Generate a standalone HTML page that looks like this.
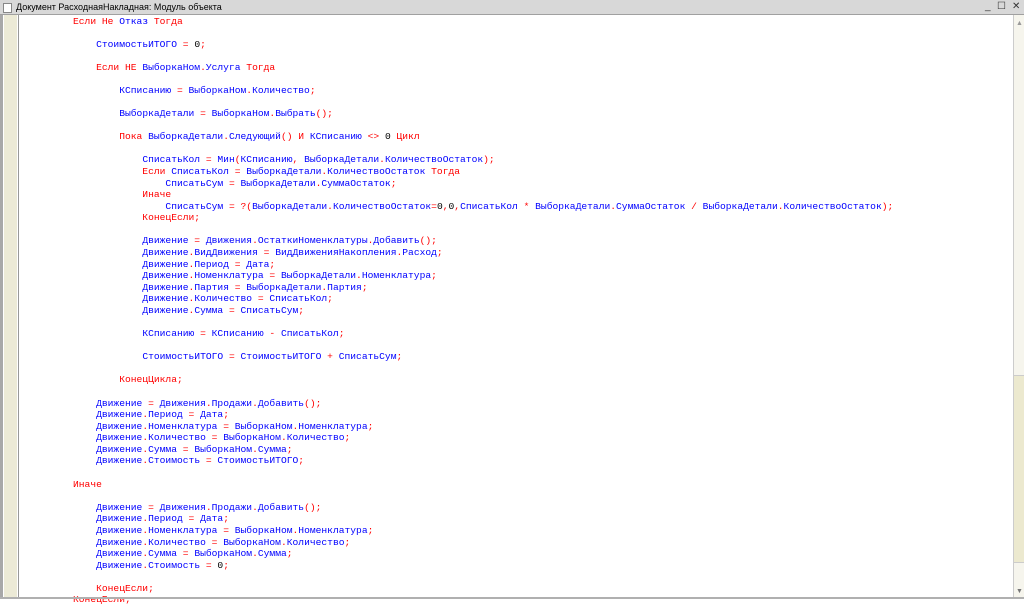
<!DOCTYPE html>
<html><head><meta charset="utf-8"><style>
html,body{margin:0;padding:0;width:1024px;height:599px;overflow:hidden;background:#fff;font-family:"Liberation Sans",sans-serif}
#title{position:absolute;left:0;top:0;width:1024px;height:14px;background:#d8d8d8;border-bottom:1px solid #a0a0a0;font-size:9px;line-height:14px;color:#000}
#title .ic{position:absolute;left:3px;top:3px;width:7px;height:8px;border:1px solid #888;background:#fff}
#title .t{position:absolute;left:16px;top:0}
#title .b{position:absolute;top:0;font-size:10px;color:#333}
#lb{position:absolute;left:0;top:15px;width:3px;height:584px;background:#a8a8a8}
#gut{position:absolute;left:4px;top:15px;width:13px;height:584px;background:#ecead6}
#gl{position:absolute;left:18px;top:15px;width:1px;height:584px;background:#999}
#sb{position:absolute;left:1013px;top:15px;width:11px;height:582px;background:#f6f5ed;border-left:1px solid #ccc}
#thumb{position:absolute;left:1013px;top:375px;width:11px;height:186px;background:#ece9cf;border-left:1px solid #ccc;border-top:1px solid #ccc;border-bottom:1px solid #ccc}
#bot{position:absolute;left:0;top:597px;width:1024px;height:2px;background:#b0b0b0}
pre{position:absolute;left:73px;top:15.5px;margin:0;font-family:"Liberation Mono",monospace;font-size:9.65px;line-height:11.58px;color:#ff0000}
.i{color:#0000ff}.n{color:#000}
</style></head><body>
<div id="title"><div class="ic"></div><span class="t">Документ РасходнаяНакладная: Модуль объекта</span>
<span class="b" style="left:985px">_</span><span class="b" style="left:997px">☐</span><span class="b" style="left:1012px">✕</span></div>
<div id="lb"></div><div id="gut"></div><div id="gl"></div>
<div id="sb"><div style="font-size:7px;color:#999;text-align:center;margin-top:5px">▲</div><div style="position:absolute;bottom:2px;width:11px;font-size:7px;color:#777;text-align:center">▼</div></div>
<div id="thumb"></div>
<pre>Если Не <span class="i">Отказ</span> Тогда

    <span class="i">СтоимостьИТОГО</span> = <span class="n">0</span>;

    Если НЕ <span class="i">ВыборкаНом</span>.<span class="i">Услуга</span> Тогда

        <span class="i">КСписанию</span> = <span class="i">ВыборкаНом</span>.<span class="i">Количество</span>;

        <span class="i">ВыборкаДетали</span> = <span class="i">ВыборкаНом</span>.<span class="i">Выбрать</span>();

        Пока <span class="i">ВыборкаДетали</span>.<span class="i">Следующий</span>() И <span class="i">КСписанию</span> &lt;&gt; <span class="n">0</span> Цикл

            <span class="i">СписатьКол</span> = <span class="i">Мин</span>(<span class="i">КСписанию</span>, <span class="i">ВыборкаДетали</span>.<span class="i">КоличествоОстаток</span>);
            Если <span class="i">СписатьКол</span> = <span class="i">ВыборкаДетали</span>.<span class="i">КоличествоОстаток</span> Тогда
                <span class="i">СписатьСум</span> = <span class="i">ВыборкаДетали</span>.<span class="i">СуммаОстаток</span>;
            Иначе
                <span class="i">СписатьСум</span> = ?(<span class="i">ВыборкаДетали</span>.<span class="i">КоличествоОстаток</span>=<span class="n">0</span>,<span class="n">0</span>,<span class="i">СписатьКол</span> * <span class="i">ВыборкаДетали</span>.<span class="i">СуммаОстаток</span> / <span class="i">ВыборкаДетали</span>.<span class="i">КоличествоОстаток</span>);
            КонецЕсли;

            <span class="i">Движение</span> = <span class="i">Движения</span>.<span class="i">ОстаткиНоменклатуры</span>.<span class="i">Добавить</span>();
            <span class="i">Движение</span>.<span class="i">ВидДвижения</span> = <span class="i">ВидДвиженияНакопления</span>.<span class="i">Расход</span>;
            <span class="i">Движение</span>.<span class="i">Период</span> = <span class="i">Дата</span>;
            <span class="i">Движение</span>.<span class="i">Номенклатура</span> = <span class="i">ВыборкаДетали</span>.<span class="i">Номенклатура</span>;
            <span class="i">Движение</span>.<span class="i">Партия</span> = <span class="i">ВыборкаДетали</span>.<span class="i">Партия</span>;
            <span class="i">Движение</span>.<span class="i">Количество</span> = <span class="i">СписатьКол</span>;
            <span class="i">Движение</span>.<span class="i">Сумма</span> = <span class="i">СписатьСум</span>;

            <span class="i">КСписанию</span> = <span class="i">КСписанию</span> - <span class="i">СписатьКол</span>;

            <span class="i">СтоимостьИТОГО</span> = <span class="i">СтоимостьИТОГО</span> + <span class="i">СписатьСум</span>;

        КонецЦикла;

    <span class="i">Движение</span> = <span class="i">Движения</span>.<span class="i">Продажи</span>.<span class="i">Добавить</span>();
    <span class="i">Движение</span>.<span class="i">Период</span> = <span class="i">Дата</span>;
    <span class="i">Движение</span>.<span class="i">Номенклатура</span> = <span class="i">ВыборкаНом</span>.<span class="i">Номенклатура</span>;
    <span class="i">Движение</span>.<span class="i">Количество</span> = <span class="i">ВыборкаНом</span>.<span class="i">Количество</span>;
    <span class="i">Движение</span>.<span class="i">Сумма</span> = <span class="i">ВыборкаНом</span>.<span class="i">Сумма</span>;
    <span class="i">Движение</span>.<span class="i">Стоимость</span> = <span class="i">СтоимостьИТОГО</span>;

Иначе

    <span class="i">Движение</span> = <span class="i">Движения</span>.<span class="i">Продажи</span>.<span class="i">Добавить</span>();
    <span class="i">Движение</span>.<span class="i">Период</span> = <span class="i">Дата</span>;
    <span class="i">Движение</span>.<span class="i">Номенклатура</span> = <span class="i">ВыборкаНом</span>.<span class="i">Номенклатура</span>;
    <span class="i">Движение</span>.<span class="i">Количество</span> = <span class="i">ВыборкаНом</span>.<span class="i">Количество</span>;
    <span class="i">Движение</span>.<span class="i">Сумма</span> = <span class="i">ВыборкаНом</span>.<span class="i">Сумма</span>;
    <span class="i">Движение</span>.<span class="i">Стоимость</span> = <span class="n">0</span>;

    КонецЕсли;
КонецЕсли;</pre>
<div id="bot"></div>
</body></html>
